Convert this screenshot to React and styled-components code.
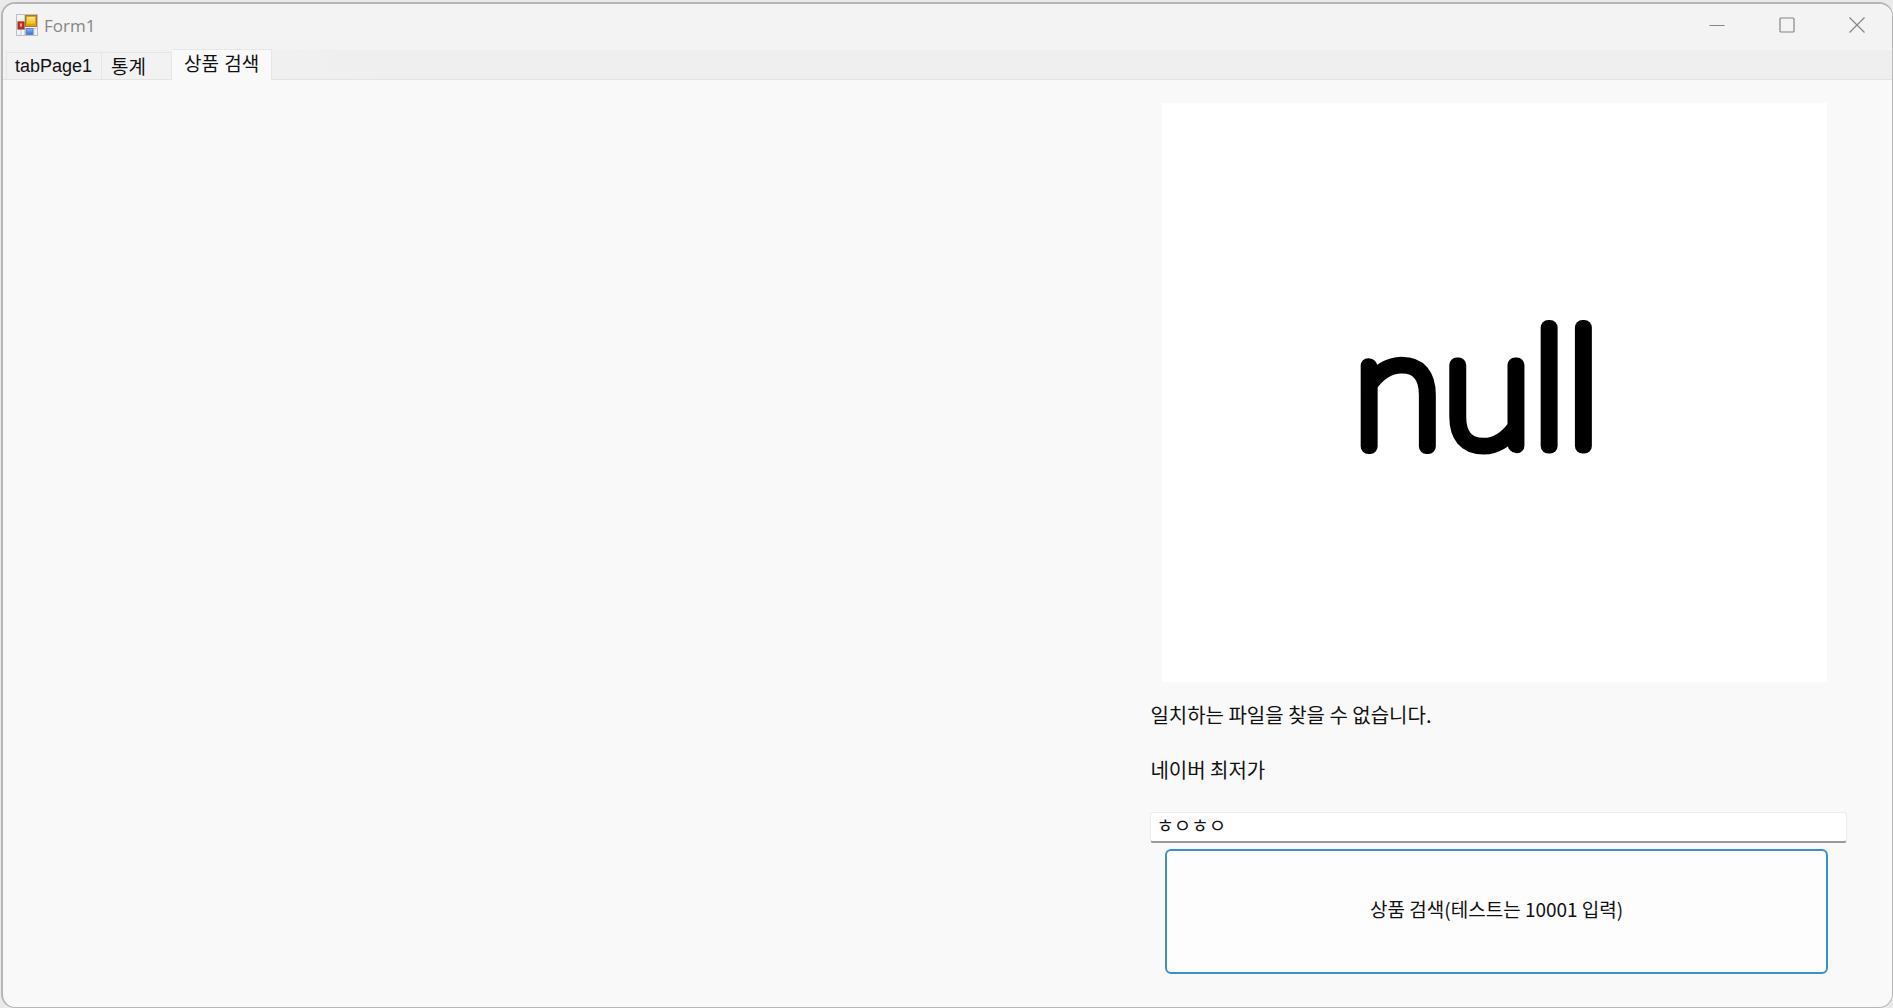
import React, { useState } from "react";
import styled, { createGlobalStyle } from "styled-components";

const GlobalStyle = createGlobalStyle`
  *, *::before, *::after { box-sizing: border-box; }
  body {
    margin: 0;
    background: #eaeaea;
    color: #111;
    font-family: "Noto Sans CJK KR", "Noto Sans", sans-serif;
  }
  button, input { font: inherit; color: inherit; }
`;

const Desktop = styled.div`
  display: flex;
  min-height: 100vh;
  padding: 2px 0 0 1px;
`;

const Window = styled.main`
  flex: 1;
  display: flex;
  flex-direction: column;
  min-width: 0;
  border: 2px solid #b6b6b6;
  border-width: 2px 1px 1px 2px;
  border-radius: 14px;
  background: #f9f9f9;
  overflow: hidden;
`;

const TitleBar = styled.header`
  display: flex;
  align-items: center;
  height: 46px;
  padding: 0 0 4px 13px;
  background: #f3f3f3;
`;

const Title = styled.h1`
  flex: 1;
  margin: 0 0 0 6px;
  padding-top: 1px;
  color: #868686;
  font: 400 17px/24px "Open Sans", sans-serif;
`;

const CaptionButton = styled.button`
  display: grid;
  place-items: center;
  width: 70px;
  height: 42px;
  padding: 0;
  border: 0;
  background: transparent;
`;

const TabStrip = styled.div`
  display: flex;
  align-items: flex-end;
  height: 30px;
  padding-left: 3px;
  border-bottom: 1px solid #e4e4e4;
  background: linear-gradient(90deg, #f2f2f2, #efefef 400px);
`;

const Tab = styled.button`
  height: ${(p) => (p.$active ? 31 : 27)}px;
  margin-bottom: ${(p) => (p.$active ? -1 : 0)}px;
  padding: ${(p) => (p.$active ? "0 12px 4px" : "0 25px 0 9px")};
  border: 1px solid #e6e6e6;
  border-bottom: 0;
  background: ${(p) => (p.$active ? "#f9f9f9" : "#f2f2f2")};
  font-size: 19px;
  line-height: 24px;
  white-space: nowrap;

  & + & { border-left: 0; }
  &:lang(en) {
    padding: 0 9px 0 8px;
    font-family: "Liberation Sans", sans-serif;
    font-size: 18px;
  }
`;

const TabPage = styled.section`
  flex: 1;
  display: grid;
  grid-template-columns: minmax(0, 28fr) minmax(0, 17fr);
  padding: 23px 45px 32px 0;
`;

const SearchPanel = styled.form`
  grid-column: 2;
  display: flex;
  flex-direction: column;
`;

const Picture = styled.svg`
  display: block;
  width: calc(100% - 32px);
  margin: 0 20px 21px 12px;
  background: #fff;
`;

const Message = styled.p`
  margin: 0 0 31px;
  font-size: 20px;
  line-height: 24px;
`;

const FieldLabel = styled.label`
  margin-bottom: 30px;
  font-size: 20px;
  line-height: 24px;
`;

const SearchInput = styled.input`
  width: 100%;
  height: 31px;
  padding: 0 5px 4px;
  border: 1px solid #ececec;
  border-bottom: 2px solid #9a9a9a;
  border-radius: 3px;
  outline: 0;
  background: #fff;
  font-size: 19px;
  line-height: 24px;
`;

const SearchButton = styled.button`
  height: 125px;
  margin: 6px 19px 0 15px;
  padding: 0 0 4px;
  border: 2px solid #3f8fd0;
  border-radius: 6px;
  background: #fdfdfd;
  font-size: 19px;
  line-height: 24px;
`;

function FormIcon() {
  return (
    <svg width="22" height="22" viewBox="0 0 22 22" aria-hidden="true">
      <defs>
        <linearGradient id="gold" x1="0" y1="0" x2="0" y2="1">
          <stop offset="0" stopColor="#ffe98c" />
          <stop offset="1" stopColor="#efb810" />
        </linearGradient>
        <linearGradient id="blue" x1="0" y1="0" x2="0" y2="1">
          <stop offset="0" stopColor="#8bb4f5" />
          <stop offset="1" stopColor="#3c70d4" />
        </linearGradient>
      </defs>
      <rect x="0.5" y="0.5" width="21" height="21" fill="#f2f3f5" stroke="#bcbfc4" />
      <path d="M1 7.5h9M8.500 1v20M1 14.500h20M5 14v7M18 14v7" stroke="#cbced3" fill="none" />
      <rect x="2" y="8" width="6" height="7" fill="#c9302b" stroke="#9d201c" />
      <rect x="4" y="9.500" width="2" height="3" fill="#f3a29c" />
      <rect x="9.500" y="1.500" width="11" height="11" fill="#d9a514" stroke="#a97b12" />
      <rect x="11" y="3" width="8" height="7" fill="url(#gold)" />
      <rect x="10" y="14.500" width="7" height="6" fill="url(#blue)" stroke="#5c84cf" />
    </svg>
  );
}

function CaptionGlyph({ children }) {
  return (
    <svg width="16" height="16" viewBox="0 0 16 16" fill="none" stroke="#858585" strokeWidth="1.2" aria-hidden="true">
      {children}
    </svg>
  );
}

const tabs = [
  { label: "tabPage1", lang: "en" },
  { label: "통계", lang: "ko" },
  { label: "상품 검색", lang: "ko" },
];

export default function App() {
  const [active, setActive] = useState(2);
  const [query, setQuery] = useState("ㅎㅇㅎㅇ");

  return (
    <>
      <GlobalStyle />
      <Desktop>
        <Window>
          <TitleBar>
            <FormIcon />
            <Title>Form1</Title>
            <CaptionButton type="button" aria-label="최소화">
              <CaptionGlyph><path d="M0.500 8.500h15" /></CaptionGlyph>
            </CaptionButton>
            <CaptionButton type="button" aria-label="최대화">
              <CaptionGlyph><rect x="1" y="1" width="14" height="14" rx="1" /></CaptionGlyph>
            </CaptionButton>
            <CaptionButton type="button" aria-label="닫기">
              <CaptionGlyph><path d="M0.500 0.500l15 15M15.500 0.500l-15 15" /></CaptionGlyph>
            </CaptionButton>
          </TitleBar>
          <TabStrip role="tablist">
            {tabs.map((tab, i) => (
              <Tab
                key={tab.label}
                type="button"
                role="tab"
                lang={tab.lang}
                aria-selected={i === active}
                $active={i === active}
                onClick={() => setActive(i)}
              >
                {tab.label}
              </Tab>
            ))}
          </TabStrip>
          <TabPage role="tabpanel">
            <SearchPanel onSubmit={(e) => e.preventDefault()}>
              <Picture viewBox="0 0 665 579" role="img" aria-label="null">
                <text
                  x="191"
                  y="343"
                  fontFamily="Lato, sans-serif"
                  fontWeight="100"
                  fontSize="165"
                  fill="#000"
                  stroke="#000"
                  strokeWidth="15"
                  strokeLinejoin="round"
                >
                  null
                </text>
              </Picture>
              <Message>일치하는 파일을 찾을 수 없습니다.</Message>
              <FieldLabel htmlFor="query">네이버 최저가</FieldLabel>
              <SearchInput id="query" value={query} onChange={(e) => setQuery(e.target.value)} />
              <SearchButton type="submit">상품 검색(테스트는 10001 입력)</SearchButton>
            </SearchPanel>
          </TabPage>
        </Window>
      </Desktop>
    </>
  );
}
